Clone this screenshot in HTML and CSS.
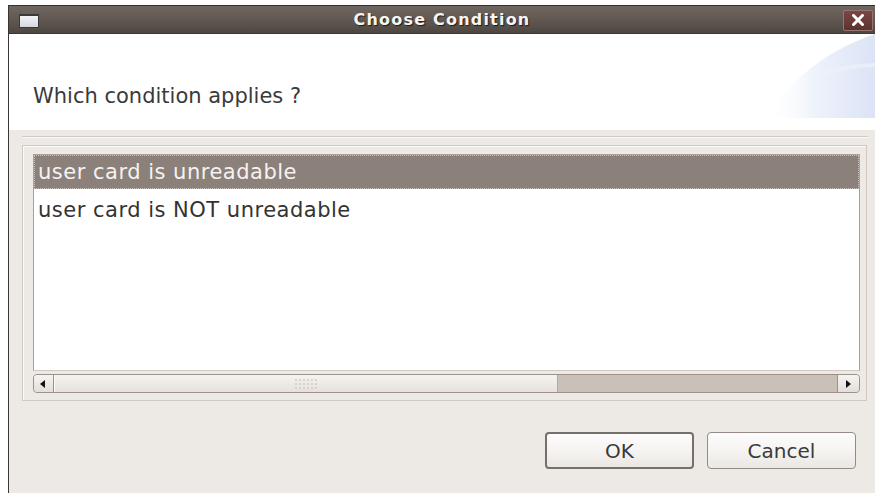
FILE: index.html
```html
<!DOCTYPE html>
<html lang="en">
<head>
<meta charset="utf-8">
<title>Choose Condition</title>
<link rel="stylesheet" href="styles.css">
</head>
<body>
<div class="window">
  <div class="titlebar">
    <div class="tb-left"><span class="win-icon"></span></div>
    <div class="tb-title">Choose Condition</div>
    <div class="tb-right">
      <button class="close-btn" aria-label="Close">
        <svg width="14" height="12" viewBox="0 0 14 12"><path d="M2.5 1.5 L11.5 10.5 M11.5 1.5 L2.5 10.5" stroke="#fff" stroke-width="3" stroke-linecap="round"/></svg>
      </button>
    </div>
  </div>

  <div class="header">
    <p class="prompt">Which condition applies ?</p>
    <svg class="swoosh" width="110" height="86" viewBox="0 0 110 86" aria-hidden="true">
      <defs>
        <linearGradient id="sw1" x1="0" y1="0" x2="1" y2="0">
          <stop offset="0" stop-color="#ffffff" stop-opacity="0"/>
          <stop offset="0.45" stop-color="#eef2fb"/>
          <stop offset="1" stop-color="#dbe3f5"/>
        </linearGradient>
        <linearGradient id="sw2" x1="0" y1="0" x2="1" y2="0">
          <stop offset="0" stop-color="#ffffff" stop-opacity="0"/>
          <stop offset="1" stop-color="#ffffff" stop-opacity="0.4"/>
        </linearGradient>
      </defs>
      <path d="M0 84 C 22 50, 57 18, 110 0 L110 84 Z" fill="url(#sw1)"/>
      <path d="M47 44 C 64 34, 84 30, 110 29 L110 33 C 86 34, 66 39, 47 44 Z" fill="url(#sw2)"/>
    </svg>
  </div>

  <div class="content">
    <div class="separator"></div>
    <div class="frame">
      <div class="list">
        <div class="row selected">user card is unreadable</div>
        <div class="row">user card is NOT unreadable</div>
      </div>
      <div class="hscroll">
        <div class="step step-left"><span class="arrow-left"></span></div>
        <div class="thumb"><span class="grip"></span></div>
        <div class="trough"></div>
        <div class="step step-right"><span class="arrow-right"></span></div>
      </div>
    </div>
    <div class="actions">
      <button class="btn btn-default">OK</button>
      <button class="btn">Cancel</button>
    </div>
  </div>
</div>
</body>
</html>
```

FILE: styles.css
```css
html, body {
  margin: 0;
  padding: 0;
  background: #ffffff;
  overflow: hidden;
}

body {
  font-family: "DejaVu Sans", "Liberation Sans", sans-serif;
  color: #3a3a3a;
}

.window {
  margin: 5px 0 0 8px;
  height: 488px;
  border-left: 1px solid #3b3632;
  background: #edeae6;
  display: flex;
  flex-direction: column;
  overflow: hidden;
}

/* ---------- title bar ---------- */
.titlebar {
  height: 28px;
  border-top: 1px solid #35302d;
  background: linear-gradient(#6e6660 0%, #645b55 40%, #574f49 75%, #4b4440 100%);
  box-shadow: inset 0 -1px 0 #3e3834;
  display: grid;
  grid-template-columns: 1fr auto 1fr;
  align-items: center;
}

.tb-left {
  padding-left: 10px;
  display: flex;
  align-items: center;
}

.win-icon {
  width: 18px;
  height: 11px;
  border: 1px solid #3a3838;
  border-top-width: 2px;
  background: linear-gradient(#f2f3f6, #d4d8df);
  margin-top: 1px;
}

.tb-title {
  font-weight: bold;
  font-size: 16px;
  letter-spacing: 1.2px;
  color: #f7f5f3;
  text-shadow: 1px 1px 1px #1e1a18;
  padding-bottom: 1px;
}

.tb-right {
  display: flex;
  justify-content: flex-end;
  padding-right: 2px;
}

.close-btn {
  width: 30px;
  height: 21px;
  padding: 0;
  border: 1px solid #937571;
  border-radius: 2px;
  background: linear-gradient(#7a4744, #5e3230);
  display: flex;
  align-items: center;
  justify-content: center;
}

/* ---------- header ---------- */
.header {
  position: relative;
  height: 96px;
  background: #ffffff;
}

.prompt {
  margin: 0;
  padding: 50px 0 0 24px;
  font-size: 21px;
  line-height: normal;
  color: #3a3a3a;
}

.swoosh {
  position: absolute;
  right: 0;
  top: 0;
}

/* ---------- content ---------- */
.content {
  flex: 1;
  display: flex;
  flex-direction: column;
}

.separator {
  margin: 6px 7px 0 13px;
  border-top: 1px solid #cfcac4;
  border-bottom: 1px solid #f9f8f6;
}

.frame {
  box-sizing: border-box;
  margin: 7px 8px 0 13px;
  height: 256px;
  border: 1px solid #cfc9c2;
  box-shadow: inset 1px 1px 0 #fbfaf9;
  padding: 8px 6px 7px 10px;
  display: flex;
  flex-direction: column;
}

.list {
  flex: 1;
  background: #ffffff;
  border: 1px solid #aaa098;
  border-bottom-color: #d2c9c0;
  display: flex;
  flex-direction: column;
  gap: 4px;
}

.row {
  height: 34px;
  line-height: 34px;
  padding-left: 4px;
  font-size: 21px;
  letter-spacing: 0.5px;
  color: #333333;
  white-space: nowrap;
}

.row.selected {
  height: 32px;
  line-height: 32px;
  padding-left: 3px;
  background: #8b807a;
  color: #f5f2f0;
  border: 1px dotted #c9c1bb;
}

/* ---------- horizontal scrollbar ---------- */
.hscroll {
  margin-top: 3px;
  height: 17px;
  border: 1px solid #9c928a;
  border-radius: 4px;
  display: flex;
  overflow: hidden;
  background: #c9c0b7;
}

.step {
  width: 19px;
  background: linear-gradient(#f6f4f2, #e3ded9);
  display: flex;
  align-items: center;
  justify-content: center;
}

.step-left {
  border-right: 1px solid #9c928a;
}

.step-right {
  width: 21px;
  border-left: 1px solid #9c928a;
}

.arrow-left {
  width: 0;
  height: 0;
  border-top: 4px solid transparent;
  border-bottom: 4px solid transparent;
  border-right: 5px solid #111111;
  margin-left: -2px;
}

.arrow-right {
  width: 0;
  height: 0;
  border-top: 4px solid transparent;
  border-bottom: 4px solid transparent;
  border-left: 5px solid #111111;
}

.thumb {
  width: 502px;
  background: linear-gradient(#f5f3f1, #e6e1dc);
  border-left: 1px solid #fbfaf9;
  border-right: 1px solid #b3aaa2;
  display: flex;
  align-items: center;
  justify-content: center;
}

.grip {
  width: 25px;
  height: 11px;
  background-image: radial-gradient(circle, #d8d2cc 0.9px, transparent 1.2px);
  background-size: 4px 4px;
  background-position: 0 0;
}

.trough {
  flex: 1;
  background: #c9c0b7;
}

/* ---------- buttons ---------- */
.actions {
  margin-top: 31px;
  padding-right: 19px;
  display: flex;
  justify-content: flex-end;
  gap: 13px;
}

.btn {
  width: 149px;
  height: 37px;
  border: 1px solid #958b84;
  border-radius: 4px;
  background: linear-gradient(#fdfcfc 0%, #f6f4f2 50%, #eae6e2 100%);
  font-family: "DejaVu Sans", "Liberation Sans", sans-serif;
  font-size: 20px;
  color: #3a3a3a;
  padding: 0;
}

.btn-default {
  border: 2px solid #77706a;
}
```
